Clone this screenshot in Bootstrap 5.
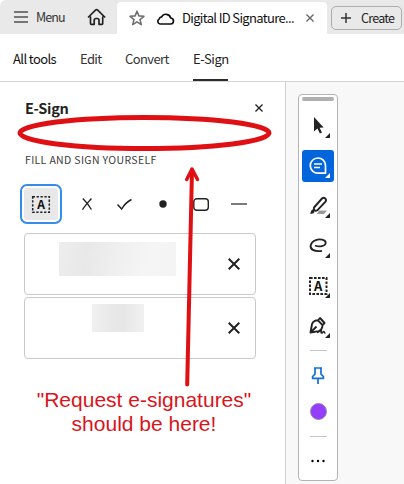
<!DOCTYPE html>
<html lang="en">
<head>
<meta charset="utf-8">
<meta name="viewport" content="width=device-width, initial-scale=1">
<title>E-Sign</title>
<link href="https://cdn.jsdelivr.net/npm/bootstrap@5.3.0/dist/css/bootstrap.min.css" rel="stylesheet">
<style>
body{width:404px;height:484px;overflow:hidden;font-family:"Noto Sans CJK SC","Noto Sans",sans-serif;font-size:13px;line-height:20px;color:#222;background:#fff}
svg{display:block;flex:none;overflow:visible}
button{border:0;background:none;padding:0;color:inherit;font:inherit;line-height:inherit;white-space:nowrap}
.topbar{height:34px;background:#e9e9e9;border-top-left-radius:6px}
.menu-btn{padding-left:14px;width:87px;gap:8px;font-size:12.5px;letter-spacing:-.9px;color:#333}
.home-btn{width:30px}
.doc-tab{margin-top:2px;width:210px;height:32px;background:#fff;border-radius:4px 4px 0 0;padding-left:12px}
.doc-title{width:113px;margin-left:8px;color:#111;white-space:nowrap;font-size:13px;letter-spacing:-.66px}
.create-btn{margin:4px 0 0 2px;width:71px;height:24px;border:1px solid #aaafac;border-radius:5px;padding-left:9px;gap:10px;font-size:12.5px;letter-spacing:-.75px}
.create-btn span{position:relative}
.tools-nav{height:48px;border-bottom:1px solid #d3d3d3;padding-left:13px;font-size:13px;line-height:49px;letter-spacing:-.6px}
.tools-nav a{color:#333;text-decoration:none;white-space:nowrap;height:47px;display:block}
.tools-nav .current{border-bottom:2px solid #2c2c2c;color:#222;letter-spacing:-.45px}
.main-area{height:402px}
.side-panel{width:286px;border-right:1px solid #d0d0d0;padding-left:24px}
.panel-head{margin-top:16px;height:20px;padding-right:22px}
.panel-title{font-size:14.5px;font-weight:700;line-height:20px;letter-spacing:-.3px;color:#222;margin:0 0 0 1px}
.section-label{margin:33px 0 0 1px;height:18px;line-height:18px;font-size:10.5px;letter-spacing:.35px;color:#3c3c3c;white-space:nowrap}
.marks{margin:15px 0 0 -4px;height:40px}
.mark-a{width:42px;height:40px;border:2px solid #348ceb;border-radius:7px;padding:2px;background:#fff}
.mark-a span{width:100%;height:100%;background:#e8e8e8;border-radius:3px}
.sig-box{width:232px;height:62px;border:1px solid #c9c9c9;border-radius:4px}
.sig-one{margin-top:9px}
.sig-two{margin-top:2px}
.redact-one{margin:8px 0 0 34px;width:117px;height:34px;background:linear-gradient(100deg,#ededed,#e8e8e8 24%,#efefef 48%,#f5f5f5 75%,#f3f3f3)}
.redact-two{margin:6px 0 0 67px;width:52px;height:28px;background:linear-gradient(90deg,#f0f0f0,#e8e8e8 40%,#e6e6e6 60%,#f1f1f1)}
.sig-x{margin-right:15px}
.doc-area{background:#f8f8f8;padding:12px 0 0 12px}
.rail{width:40px;height:387px;background:#fff;border:1px solid #b3b3b3;border-radius:4px;padding-top:2px}
.grip{width:32px;height:4px;background:#b0b0b0;border-radius:2px}
.tool{width:32px;height:32px;margin-bottom:8px}
.tool.active{background:#0265dc;border-radius:3px}
.rule{width:17px;height:1px;background:#c6c6c6}
.swatch{width:17px;height:17px;border-radius:50%;background:#933efb;border:1px solid #9886ad}
.callout{left:0;top:0;pointer-events:none}
.note{left:14px;top:388px;width:260px;font:21px/24px "Liberation Sans",Arial,sans-serif;color:#d9141b;text-align:center;white-space:nowrap}
</style>
</head>
<body class="position-relative">
<svg width="0" height="0" class="position-absolute">
<symbol id="cross" viewBox="0 0 12 12"><path d="M.7.7 11.3 11.3M11.3.7.7 11.3" fill="none" stroke="currentColor" stroke-width="2"/></symbol>
</svg>
<header class="topbar d-flex">
  <button class="menu-btn d-flex align-items-center"><svg width="14" height="12"><path d="M0 1h14M0 6h14M0 11h14" stroke="#505050" stroke-width="1.6"/></svg><span>Menu</span></button>
  <button class="home-btn" aria-label="Home"><svg width="20" height="18" viewBox="0 0 20 18" fill="none" stroke="#222" stroke-width="1.7" stroke-linejoin="round" stroke-linecap="round"><path d="M3.500 9v6.500q0 .8.8.8h2.900v-4q0-1.800 1.800-1.800h1.200q1.800 0 1.800 1.800v4h2.900q.8 0 .8-.8V9M1.500 9 8.500 2.200q1.100-1 2.200 0L17.700 9"/></svg></button>
  <div class="doc-tab d-flex align-items-center">
    <svg width="16" height="16" viewBox="0 0 16 16"><path d="M8 1.200 9.900 5.900l5 .4-3.900 3.300 1.300 5L8 11.800l-4.300 2.800L5 9.600 1.100 6.300l5-.4z" fill="none" stroke="#707070" stroke-width="1.600" stroke-linejoin="round"/></svg>
    <svg width="18" height="13" viewBox="0 0 18 13" style="margin-left:11px"><path d="M4 12h10.200a3 3 0 0 0 .5-6A4.900 4.900 0 0 0 5.600 4.900 3.200 3.200 0 0 0 3 7.100 2.700 2.700 0 0 0 4 12z" fill="none" stroke="#111" stroke-width="1.700"/></svg>
    <span class="doc-title">Digital ID Signature...</span>
    <svg width="8" height="8" style="margin-left:11px;color:#666"><use href="#cross"/></svg>
  </div>
  <button class="create-btn d-flex align-items-center" style="margin:6px 0 0 4px"><svg width="10" height="10"><path d="M0 5h10M5 0v10" stroke="#333" stroke-width="1.500"/></svg><span>Create</span></button>
</header>
<nav class="tools-nav d-flex">
  <a href="#" style="width:67px;color:#111">All tools</a><a href="#" style="width:45px">Edit</a><a href="#" style="width:68px">Convert</a><a href="#" class="current" style="width:35px">E-Sign</a>
</nav>
<main class="main-area d-flex">
  <section class="side-panel">
    <div class="panel-head d-flex justify-content-between align-items-center"><h1 class="panel-title">E-Sign</h1><svg width="8" height="8"><use href="#cross"/></svg></div>
    <div class="section-label">FILL AND SIGN YOURSELF</div>
    <div class="marks d-flex align-items-center">
      <button class="mark-a"><span class="d-flex align-items-center justify-content-center"><svg width="18" height="17" viewBox="0 0 18 17"><rect x=".700" y=".700" width="16.600" height="15.600" fill="none" stroke="#222" stroke-width="1.500" stroke-dasharray="2.300 1.600"/><text x="9" y="12.800" text-anchor="middle" font-size="12" font-weight="700" fill="#111">A</text></svg></span></button>
      <svg width="10" height="12" viewBox="0 0 10 12" style="margin-left:20px"><path d="M.8.5C4 3.500 7 7.500 9.400 11.500M9.400.5C6.500 4 3 7.500.5 11.700" fill="none" stroke="#222" stroke-width="1.400"/></svg>
      <svg width="15" height="11" viewBox="0 0 15 11" style="margin-left:25px"><path d="M.5 5.500 4.700 10C7 6 10.500 2.500 14.500.5" fill="none" stroke="#222" stroke-width="1.500"/></svg>
      <svg width="8" height="8" style="margin-left:27px"><circle cx="4" cy="4" r="3.700" fill="#222"/></svg>
      <svg width="16" height="13" style="margin-left:26px"><rect x=".8" y=".8" width="14.500" height="11.500" rx="3" fill="none" stroke="#222" stroke-width="1.400"/></svg>
      <svg width="16" height="2" style="margin-left:22px"><path d="M0 1h16" stroke="#444" stroke-width="1.400"/></svg>
    </div>
    <div class="sig-box sig-one d-flex justify-content-between"><div class="redact-one"></div><svg class="sig-x align-self-center" width="12" height="12"><use href="#cross"/></svg></div>
    <div class="sig-box sig-two d-flex justify-content-between"><div class="redact-two"></div><svg class="sig-x align-self-center" width="12" height="12"><use href="#cross"/></svg></div>
  </section>
  <section class="doc-area flex-grow-1">
    <div class="rail d-flex flex-column align-items-center">
      <div class="grip"></div>
      <button class="tool" style="margin-top:9px"><svg width="32" height="32"><path d="M12 7v14.500l3.400-3 2.500 5 2.100-1-2.400-4.700 4-.3z" fill="#222"/><path d="M28 23v5h-5z" fill="#222"/></svg></button>
      <button class="tool active"><svg width="32" height="32"><path d="M23.500 23.200H16A7.600 7.600 0 1 1 23.500 15.600z" fill="none" stroke="#fff" stroke-width="1.700" stroke-linejoin="round"/><path d="M12 14h8M12 17.500h6" stroke="#fff" stroke-width="1.500"/><path d="M28 23v5h-5z" fill="#fff"/></svg></button>
      <button class="tool"><svg width="32" height="32"><path d="M17 20.500h8l-3 3.500h-7z" fill="#999"/><path d="m12 17.500 8-9q1.500-1.500 3.200-.1 1.500 1.500.3 3.200L15.300 20.300q-1.400 1-2.700-.1-1.300-1.200-.6-2.700z" fill="#fff" stroke="#222" stroke-width="1.900"/><path d="M8 23.500c1-.5.500-3 2.200-3.800 2-.6 3.200 2 1.600 3.400-1 .8-2.600.8-3.800.4z" fill="#222"/><path d="M28 23v5h-5z" fill="#222"/></svg></button>
      <button class="tool"><svg width="32" height="32"><path d="M13 15.500c4.500 2 10.500.5 10.700-2.500.2-3.300-6-4.500-10.400-2.700-5 2.200-6.300 7.500-2.500 9.600 2.600 1.400 5.900 1.500 9.200.9" fill="none" stroke="#222" stroke-width="1.800"/><path d="M28 23v5h-5z" fill="#222"/></svg></button>
      <button class="tool"><svg width="32" height="32"><rect x="8" y="8" width="16.500" height="16" fill="none" stroke="#222" stroke-width="2" stroke-dasharray="2.600 1.400"/><text x="16.200" y="21" text-anchor="middle" font-size="13" font-weight="700" fill="#111">A</text><path d="M28 23v5h-5z" fill="#222"/></svg></button>
      <button class="tool"><svg width="32" height="32"><path d="m8.500 22.500 1.500-8.500q1.500-3.500 6-3.700l4.500 4.800q0 4.400-3.500 6zM8.500 22.500l6-6M16 10.300l2-2.300 4.500 5-2 2.100" fill="none" stroke="#222" stroke-width="1.900" stroke-linejoin="round"/><path d="M15 22.500c2 0 3.500-2.500 4.300-2 .7.500-.8 2.200 0 2.600 1 .3 1.700-1.700 2.700-1.500.8.300 0 1.600 1.500 1.600" fill="none" stroke="#222" stroke-width="1.500"/><path d="M28 23v5h-5z" fill="#222"/></svg></button>
      <div class="rule"></div>
      <svg width="14" height="18" viewBox="0 0 14 18" style="margin-top:16px"><path d="M3 1h8M4 1.200v6L1.600 9.500v1.900h10.800V9.500L10 7.200v-6M7 11.500v5.500" fill="none" stroke="#146fd7" stroke-width="1.700" stroke-linejoin="round"/></svg>
      <div class="swatch" style="margin-top:18px"></div>
      <div class="rule" style="margin-top:16px"></div>
      <svg width="14" height="4" style="margin-top:22px"><circle cx="1.500" cy="2" r="1.200"/><circle cx="7" cy="2" r="1.200"/><circle cx="12.500" cy="2" r="1.200"/></svg>
    </div>
  </section>
</main>
<svg class="callout position-absolute" width="286" height="400" fill="none" stroke="#df1014"><ellipse cx="144.500" cy="133" rx="124.500" ry="15.500" stroke-width="5"/><path d="M187.200 384.500 192 170" stroke-width="4" stroke-linecap="round"/><path d="M186.700 179.500 192 169l5.500 10.500" stroke-width="3.500" stroke-linecap="round" stroke-linejoin="round"/></svg>
<div class="note position-absolute">"Request e-signatures"<br>should be here!</div>
<script src="https://cdn.jsdelivr.net/npm/bootstrap@5.3.0/dist/js/bootstrap.bundle.min.js"></script>
</body>
</html>
